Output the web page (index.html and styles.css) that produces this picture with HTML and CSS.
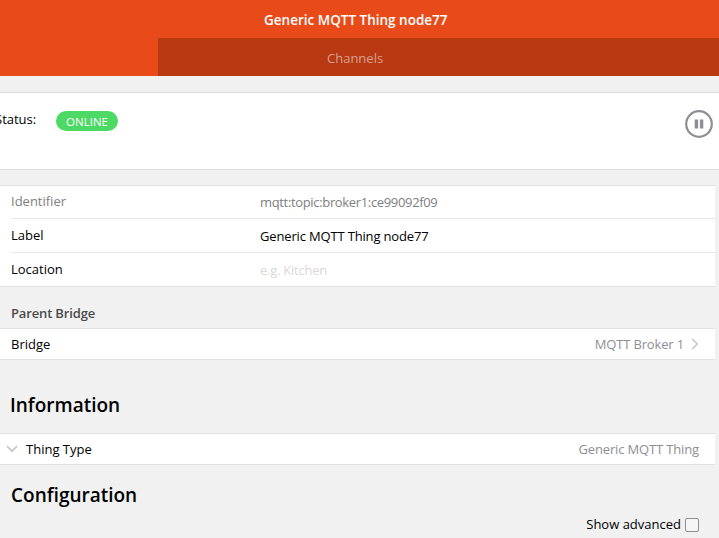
FILE: index.html
```html
<!DOCTYPE html>
<html lang="en">
<head>
<meta charset="utf-8">
<title>Generic MQTT Thing node77</title>
<link rel="stylesheet" href="styles.css">
</head>
<body>
<header class="header">
  <div class="title">Generic MQTT Thing node77</div>
  <div class="tabs">
    <div class="tab-gap"></div>
    <div class="tab">Channels</div>
  </div>
</header>
<section class="status-card">
  <div class="status-left">
    <span class="status-label">Status:</span>
    <span class="badge">ONLINE</span>
  </div>
  <svg class="pause" width="28" height="28" viewBox="0 0 28 28" aria-hidden="true">
    <circle cx="14" cy="14" r="12.8" fill="none" stroke="#8e8e93" stroke-width="2.2"/>
    <rect x="9.7" y="9.5" width="3.4" height="9" fill="#8e8e93"/>
    <rect x="14.9" y="9.5" width="3.4" height="9" fill="#8e8e93"/>
  </svg>
</section>
<section class="list form-list">
  <div class="form-row first muted"><span class="key">Identifier</span><span class="val id-val">mqtt:topic:broker1:ce99092f09</span></div>
  <div class="form-row"><span class="key">Label</span><span class="val">Generic MQTT Thing node77</span></div>
  <div class="form-row last"><span class="key">Location</span><span class="val placeholder">e.g. Kitchen</span></div>
</section>
<h3 class="group-title">Parent Bridge</h3>
<section class="list simple-row">
  <span class="key">Bridge</span>
  <span class="after">MQTT Broker 1
    <svg class="chev" width="8" height="12" viewBox="0 0 8 12" aria-hidden="true"><path d="M1.2 1l5 5-5 5" fill="none" stroke="#c7c7cc" stroke-width="1.7"/></svg>
  </span>
</section>
<h2 class="heading info">Information</h2>
<section class="list simple-row type-row">
  <span class="type-left">
    <svg class="chev-down" width="12" height="8" viewBox="0 0 12 8" aria-hidden="true"><path d="M1 1.2l5 5 5-5" fill="none" stroke="#c7c7cc" stroke-width="1.7"/></svg>
    <span class="key">Thing Type</span>
  </span>
  <span class="after">Generic MQTT Thing</span>
</section>
<h2 class="heading config">Configuration</h2>
<div class="advanced"><span>Show advanced</span><span class="check"></span></div>
</body>
</html>
```
FILE: styles.css
```css
html, body { margin: 0; padding: 0; height: 538px; overflow: hidden; }
body { background: #f1f1f1; color: #000; font-family: "Open Sans", "Noto Sans", sans-serif; font-size: 13px; line-height: 17px; }
.header { background: #e84b19; height: 76px; display: flex; flex-direction: column; }
.title { height: 38px; line-height: 40px; padding-left: 264px; color: #fff; font-weight: 600; font-size: 13.5px; }
.tabs { display: flex; height: 38px; }
.tab-gap { width: 158px; }
.tab { flex: 1; background: #b93a12; color: #d6a18f; padding-left: 169px; line-height: 41px; }
.status-card { margin-top: 16px; height: 76px; background: #fff; border-top: 1px solid #dedede; border-bottom: 1px solid #dedede; display: flex; justify-content: space-between; padding-right: 6px; }
.status-left { display: flex; align-items: flex-start; margin-left: -5px; padding-top: 18px; }
.status-label { width: 61px; }
.badge { background: #4cd964; color: #fff; border-radius: 10px; height: 20px; line-height: 21px; width: 62px; text-align: center; font-size: 11.5px; }
.pause { margin-top: 17px; }
.list { width: 715px; background: #fff; border-top: 1px solid #e2e2e2; border-bottom: 1px solid #e2e2e2; }
.form-list { margin-top: 15px; }
.form-row { box-sizing: border-box; height: 34px; padding-top: 2px; margin-left: 11px; border-bottom: 1px solid #e8e8e8; display: flex; align-items: center; }
.form-row.first { height: 33px; padding-top: 0; }
.form-row.last { height: 33px; border-bottom: 0; }
.key { display: block; }
.form-row .key { width: 249px; margin-top: -2px; }
.val { letter-spacing: -0.16px; }
.id-val { letter-spacing: -0.34px; }
.muted { color: #808080; }
.placeholder { color: #dcd8d8; letter-spacing: -0.25px; }
.group-title { margin: 18px 0 6px 11px; font-size: 13px; line-height: 17px; font-weight: 600; color: #4a4a4a; letter-spacing: -0.15px; }
.simple-row { height: 30px; display: flex; align-items: center; justify-content: space-between; padding-left: 11px; box-sizing: content-box; width: 704px; }
.after { color: #8e8e93; display: flex; align-items: center; gap: 7px; padding-right: 16px; letter-spacing: -0.15px; }
.heading { margin: 0; font-size: 19px; line-height: 26px; font-weight: 600; padding-left: 10px; }
.info { margin-top: 32px; margin-bottom: 15px; }
.type-row { padding-left: 6px; width: 709px; }
.type-left { display: flex; align-items: center; gap: 8px; }
.config { margin-top: 17px; padding-left: 11px; }
.advanced { display: flex; justify-content: flex-end; align-items: center; gap: 4px; padding-right: 20px; margin-top: 8px; }
.check { width: 12px; height: 12px; border: 1px solid #8e8e93; border-radius: 2px; background: #f6f6f6; }
```
